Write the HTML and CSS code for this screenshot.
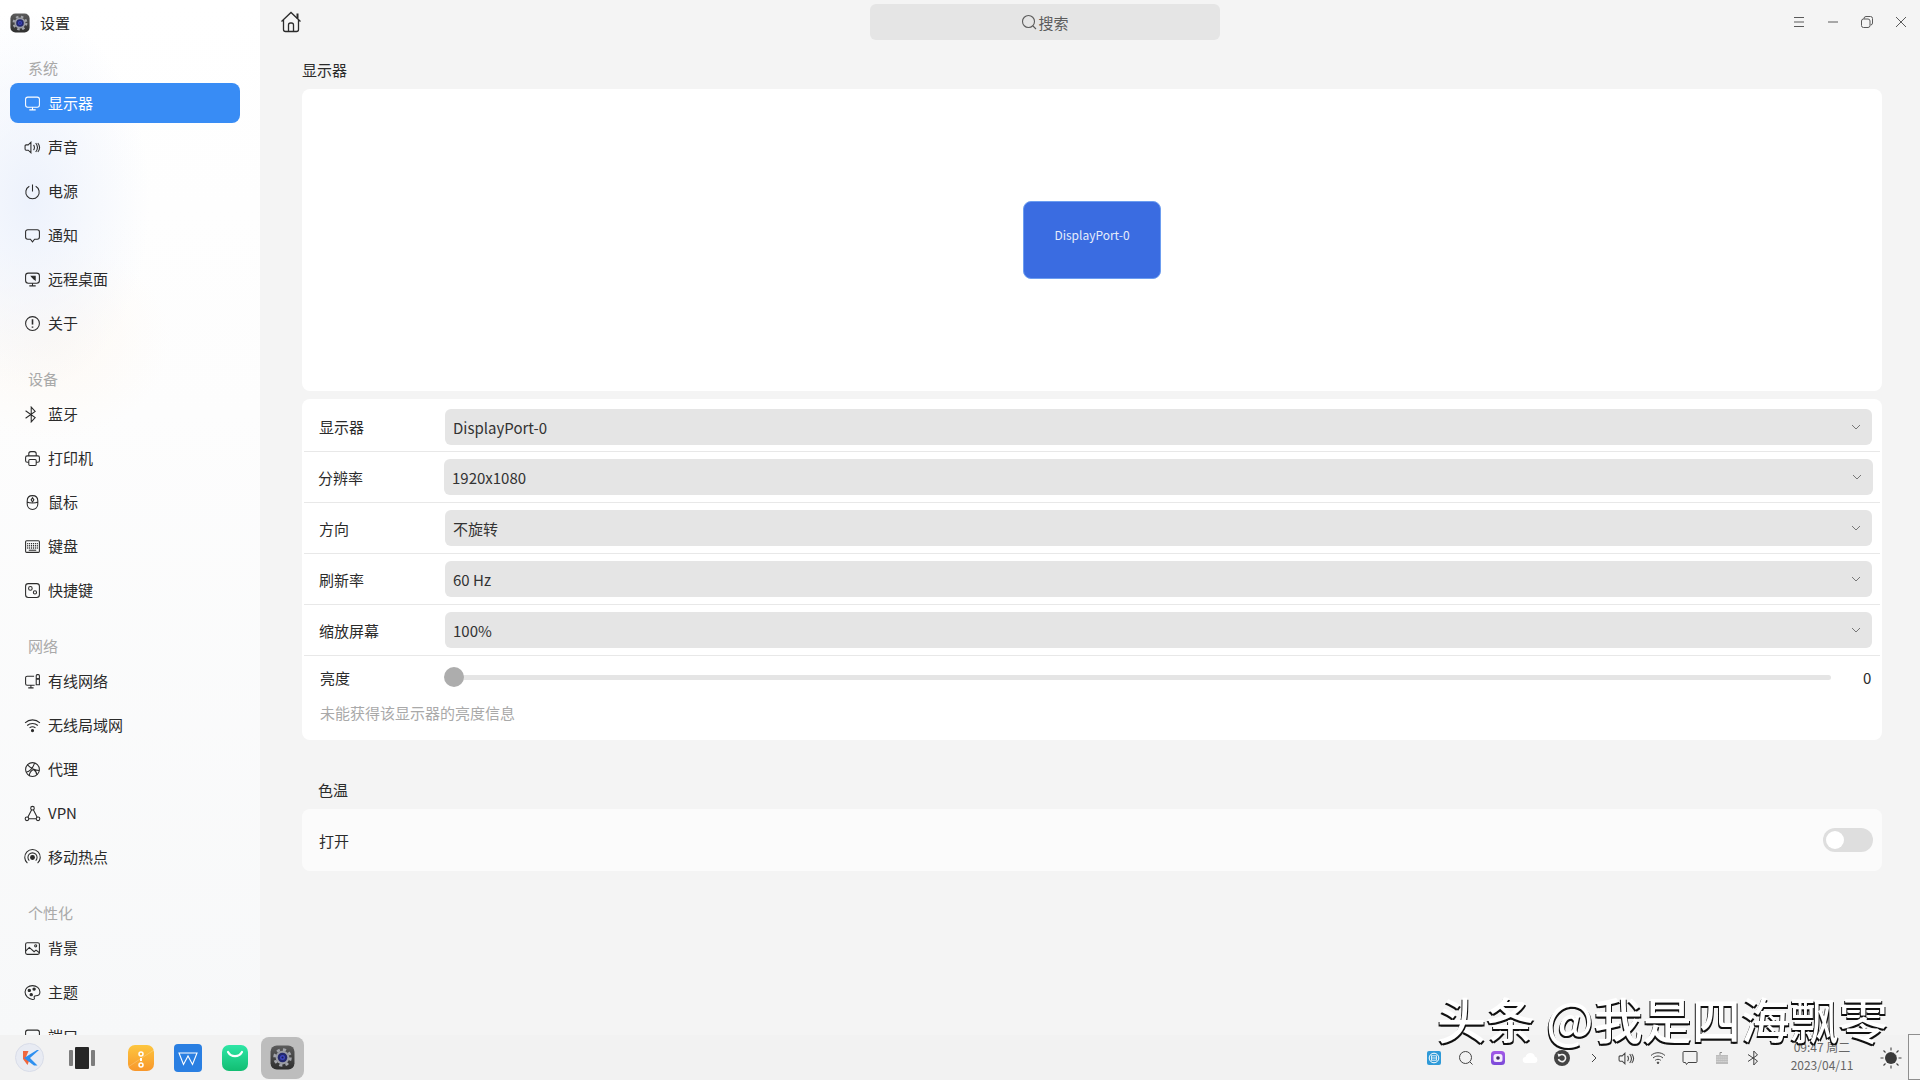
FILE: index.html
```html
<!DOCTYPE html>
<html lang="zh-CN">
<head>
<meta charset="utf-8">
<title>设置</title>
<link rel="stylesheet" href="styles.css">
</head>
<body>
<svg class="defs" width="0" height="0" aria-hidden="true">
  <defs>
    <linearGradient id="gYellow" x1="0" y1="0" x2="0" y2="1"><stop offset="0" stop-color="#fdc63f"/><stop offset="1" stop-color="#f8972b"/></linearGradient>
    <linearGradient id="gGreen" x1="0" y1="0" x2="0" y2="1"><stop offset="0" stop-color="#2fe6a6"/><stop offset="1" stop-color="#12bd72"/></linearGradient>
    <linearGradient id="gPurple" x1="0" y1="0" x2="0" y2="1"><stop offset="0" stop-color="#a45ae8"/><stop offset="1" stop-color="#7a49d8"/></linearGradient>
    <linearGradient id="gDark" x1="0" y1="0" x2="0" y2="1"><stop offset="0" stop-color="#5c5c5c"/><stop offset="1" stop-color="#2e2e2e"/></linearGradient>
    <symbol id="gear" viewBox="0 0 24 24">
      <rect x="0.5" y="0.5" width="23" height="23" rx="6" fill="url(#gDark)"/>
      <circle cx="12" cy="12" r="7.6" fill="none" stroke="#a2a4aa" stroke-width="2.6" stroke-dasharray="3 3"/>
      <circle cx="12" cy="12" r="6.6" fill="#9a9ca4"/>
      <circle cx="12" cy="12" r="4.6" fill="#23286f"/>
      <circle cx="12" cy="12" r="2.4" fill="#3d46c0"/>
      <circle cx="12" cy="12" r="1" fill="#1b1d55"/>
    </symbol>
  </defs>
</svg>

<div class="app">
  <aside class="sidebar">
    <div class="app-title">
      <svg class="app-logo" width="20" height="20"><use href="#gear"/></svg>
      <span>设置</span>
    </div>

    <div class="nav-group">
      <div class="nav-label">系统</div>
      <div class="nav-item active">
        <svg class="ico" viewBox="0 0 16 16"><rect x="1.5" y="2" width="13" height="9.5" rx="2"/><path d="M8 11.5V14M5 14h6"/></svg><span>显示器</span>
      </div>
      <div class="nav-item">
        <svg class="ico" viewBox="0 0 16 16"><path d="M4 5.500 6.500 3v10L4 10.500H2a1 1 0 0 1-1-1v-3a1 1 0 0 1 1-1z"/><path d="M9 5.500c1 1.500 1 3.500 0 5M11 3.800c2 2.500 2 5.900 0 8.400M13 3.800c2 2.500 2 5.900 0 8.400"/></svg><span>声音</span>
      </div>
      <div class="nav-item">
        <svg class="ico" viewBox="0 0 16 16"><path d="M8 1.500v6.500M5 3a6.300 6.300 0 1 0 6 0"/></svg><span>电源</span>
      </div>
      <div class="nav-item">
        <svg class="ico" viewBox="0 0 16 16"><path d="M3.500 2.500h9a2 2 0 0 1 2 2v5a2 2 0 0 1-2 2H10l-2 2.500-2-2.500H3.500a2 2 0 0 1-2-2v-5a2 2 0 0 1 2-2z"/></svg><span>通知</span>
      </div>
      <div class="nav-item">
        <svg class="ico" viewBox="0 0 16 16"><rect x="1.500" y="2" width="13" height="9.500" rx="2.500"/><path d="M8 11.500V14M5 14h6"/><path class="solid" d="M7 5h3.500v3.500z"/><path d="M10 8 7 5"/></svg><span>远程桌面</span>
      </div>
      <div class="nav-item">
        <svg class="ico" viewBox="0 0 16 16"><circle cx="8" cy="8" r="6.500"/><path class="thick" d="M8 4v5"/><path class="thick" d="M8 10.800v1.200"/></svg><span>关于</span>
      </div>
    </div>

    <div class="nav-group">
      <div class="nav-label">设备</div>
      <div class="nav-item">
        <svg class="ico" viewBox="0 0 16 16"><path d="M1.500 4.500 10.500 11 6.800 15V1l3.700 4-9 6.500"/></svg><span>蓝牙</span>
      </div>
      <div class="nav-item">
        <svg class="ico" viewBox="0 0 16 16"><path d="M4.500 5.500V3.500a2 2 0 0 1 2-2h3a2 2 0 0 1 2 2v2M4.500 11.500H3a1.500 1.500 0 0 1-1.500-1.500V7A1.500 1.500 0 0 1 3 5.500h10A1.500 1.500 0 0 1 14.500 7v3a1.500 1.500 0 0 1-1.500 1.500h-1.500"/><rect x="4.500" y="9" width="7" height="5.500" rx="1"/></svg><span>打印机</span>
      </div>
      <div class="nav-item">
        <svg class="ico" viewBox="0 0 16 16"><path d="M8 1.500c3 0 5 2 5 5v3c0 3-2.200 5-5 5s-5-2-5-5v-3c0-3 2-5 5-5zM3 7.500c2 1.300 8 1.300 10 0"/><path d="M8 3.500 6.700 5.500 8 7.500l1.300-2z"/></svg><span>鼠标</span>
      </div>
      <div class="nav-item">
        <svg class="ico" viewBox="0 0 16 16"><rect x="1.500" y="2.500" width="13" height="11" rx="1"/><path class="dots" d="M3 5.200h10M3 7.300h10M3 9.400h10"/><path d="M4.500 11.500h7"/></svg><span>键盘</span>
      </div>
      <div class="nav-item">
        <svg class="ico" viewBox="0 0 16 16"><rect x="1.500" y="1.500" width="13" height="13" rx="2.500"/><circle cx="6" cy="6" r="1.700"/><circle cx="10.300" cy="9.800" r="1.500"/></svg><span>快捷键</span>
      </div>
    </div>

    <div class="nav-group">
      <div class="nav-label">网络</div>
      <div class="nav-item">
        <svg class="ico" viewBox="0 0 16 16"><path d="M9.500 3H3a1.500 1.500 0 0 0-1.500 1.500V10A1.500 1.500 0 0 0 3 11.500h7M6.500 11.500V14M4 14h5"/><rect x="11.500" y="1.500" width="3" height="4" rx="1"/><path d="M11.500 5.500h3V11h-3z"/></svg><span>有线网络</span>
      </div>
      <div class="nav-item">
        <svg class="ico" viewBox="0 0 16 16"><path d="M1 5.500c4-3.700 10-3.700 14 0M3 8c2.900-2.600 7.100-2.600 10 0M5.200 10.300c1.600-1.300 4-1.300 5.600 0"/><circle class="solid" cx="8" cy="12.800" r="1"/></svg><span>无线局域网</span>
      </div>
      <div class="nav-item">
        <svg class="ico" viewBox="0 0 16 16"><circle cx="8" cy="8" r="6.500"/><path d="M3 3.500c3 3 6.500 5.500 11.500 5.500M2 10.500c3-.5 6-3 8-8.500M5 14c0-3 2-5 4-6 1.500 1 3 3 3 5"/></svg><span>代理</span>
      </div>
      <div class="nav-item">
        <svg class="ico" viewBox="0 0 16 16"><circle cx="8" cy="3" r="1.700"/><circle cx="2.800" cy="13" r="1.700"/><circle cx="13.200" cy="13" r="1.700"/><path d="M7.200 4.500 3.600 11.500M8.800 4.500l3.600 7M4.500 13h7"/></svg><span>VPN</span>
      </div>
      <div class="nav-item">
        <svg class="ico" viewBox="0 0 16 16"><circle class="solid" cx="8" cy="8" r="1.800"/><path d="M5 11a4.300 4.300 0 1 1 6 0M3.200 13.300a7.300 7.300 0 1 1 9.600 0"/></svg><span>移动热点</span>
      </div>
    </div>

    <div class="nav-group">
      <div class="nav-label">个性化</div>
      <div class="nav-item">
        <svg class="ico" viewBox="0 0 16 16"><rect x="1.500" y="2.500" width="13" height="11" rx="1.500"/><path d="M1.500 10.500 5 7l4.500 4 1.800-1.500 3.200 2.500"/><circle cx="11" cy="5.500" r="1"/></svg><span>背景</span>
      </div>
      <div class="nav-item">
        <svg class="ico" viewBox="0 0 16 16"><path d="M8 1.500c3.800 0 7 2.700 7 6 0 2.500-2 3.500-3.800 3.500-1.500 0-2 1-1.500 2 .5 1.200-.2 1.700-1.700 1.500C4 14 1 11 1 7.500 1 4.200 4.200 1.500 8 1.500z"/><circle class="solid" cx="5" cy="6" r="1.100"/><circle class="solid" cx="9.500" cy="4.800" r="1.100"/><circle class="solid" cx="6.800" cy="10" r="1.100"/></svg><span>主题</span>
      </div>
      <div class="nav-item">
        <svg class="ico" viewBox="0 0 16 16"><rect x="1.500" y="2" width="13" height="12" rx="2"/></svg><span>端口</span>
      </div>
    </div>
  </aside>

  <main class="main">
    <header class="topbar">
      <svg class="home" viewBox="0 0 22 22"><path d="M1.500 10.500 11 1.500l9.500 9M3.500 9v9.500a2 2 0 0 0 2 2h11a2 2 0 0 0 2-2V9"/><path class="heavy" d="M17.500 2.500v5"/><path d="M8.500 20.500V14a2 2 0 0 1 2-2h1a2 2 0 0 1 2 2v6.500"/></svg>
      <div class="search">
        <svg class="search-ico" viewBox="0 0 16 16"><circle cx="7.500" cy="7.500" r="6"/><path d="m12 12 3 3"/></svg>
        <span>搜索</span>
      </div>
      <div class="win-controls">
        <button class="win-btn"><svg class="win-ico" viewBox="0 0 12 12"><path d="M1 1.500h10M1 6h10M1 10.500h10"/></svg></button>
        <button class="win-btn"><svg class="win-ico" viewBox="0 0 12 12"><path d="M1 6h10"/></svg></button>
        <button class="win-btn"><svg class="win-ico" viewBox="0 0 12 12"><rect x="0.500" y="3" width="8.500" height="8.500" rx="2"/><path d="M3 3V2.500a2 2 0 0 1 2-2h4.500a2 2 0 0 1 2 2V7a2 2 0 0 1-2 2"/></svg></button>
        <button class="win-btn"><svg class="win-ico" viewBox="0 0 12 12"><path d="m1 1 10 10M11 1 1 11"/></svg></button>
      </div>
    </header>

    <div class="content">
      <h2 class="sec-title">显示器</h2>
      <section class="card preview">
        <div class="monitor"><span>DisplayPort-0</span></div>
      </section>

      <section class="card options">
        <div class="row first">
          <span class="row-label">显示器</span>
          <div class="select"><span>DisplayPort-0</span><svg class="chev" viewBox="0 0 10 6"><path d="m1 1 4 4 4-4"/></svg></div>
        </div>
        <div class="row shifted">
          <span class="row-label">分辨率</span>
          <div class="select"><span>1920x1080</span><svg class="chev" viewBox="0 0 10 6"><path d="m1 1 4 4 4-4"/></svg></div>
        </div>
        <div class="row">
          <span class="row-label">方向</span>
          <div class="select"><span>不旋转</span><svg class="chev" viewBox="0 0 10 6"><path d="m1 1 4 4 4-4"/></svg></div>
        </div>
        <div class="row">
          <span class="row-label">刷新率</span>
          <div class="select"><span>60 Hz</span><svg class="chev" viewBox="0 0 10 6"><path d="m1 1 4 4 4-4"/></svg></div>
        </div>
        <div class="row">
          <span class="row-label">缩放屏幕</span>
          <div class="select"><span>100%</span><svg class="chev" viewBox="0 0 10 6"><path d="m1 1 4 4 4-4"/></svg></div>
        </div>
        <div class="slider-row">
          <span class="row-label">亮度</span>
          <div class="track"><div class="thumb"></div></div>
          <span class="slider-val">0</span>
        </div>
        <div class="hint">未能获得该显示器的亮度信息</div>
      </section>

      <h2 class="sec-title second">色温</h2>
      <section class="card toggle-card">
        <span>打开</span>
        <div class="toggle"><div class="knob"></div></div>
      </section>
    </div>
  </main>
</div>

<footer class="taskbar">
  <div class="dock">
    <div class="dock-cell start">
      <svg width="29" height="29" viewBox="0 0 29 29"><circle cx="14.500" cy="14.500" r="14" fill="#e8ebf3" stroke="#d8dce8"/><path d="M8 8h5.500l-2.500 6 3 4-1.500 4L8 16z" fill="#f0673e"/><path d="M22 7 9 15l10 7.500h3.500L15 15l9-8z" fill="#2d8ff0"/></svg>
    </div>
    <div class="dock-cell view">
      <div class="side-bar"></div><div class="main-bar"></div><div class="side-bar"></div>
    </div>
    <div class="dock-cell">
      <svg width="26" height="26" viewBox="0 0 26 26"><rect width="26" height="26" rx="7" fill="url(#gYellow)"/><path d="M26 5 0 22" stroke="#fff" stroke-width="0.800" opacity=".25"/><circle cx="13" cy="9" r="2" fill="none" stroke="#fff" stroke-width="1.500"/><circle cx="13" cy="20" r="2" fill="none" stroke="#fff" stroke-width="1.500"/><path d="M13 13v3" stroke="#fff" stroke-width="2"/></svg>
    </div>
    <div class="dock-cell">
      <svg width="28" height="28" viewBox="0 0 28 28"><rect width="28" height="28" rx="4" fill="#2a7fe2"/><path d="M5 9h18l-4.500 11.500L14 12l-4.500 8.500z" fill="none" stroke="#fff" stroke-width="1.100"/></svg>
    </div>
    <div class="dock-cell">
      <svg width="26" height="26" viewBox="0 0 26 26"><rect width="26" height="26" rx="7" fill="url(#gGreen)"/><path d="M6 7c3 5.500 11 5.500 14 0" fill="none" stroke="#fff" stroke-width="2.200" stroke-linecap="round"/></svg>
    </div>
    <div class="dock-cell">
      <div class="dock-active"><svg width="25" height="25"><use href="#gear"/></svg></div>
    </div>
  </div>

  <div class="tray">
    <div class="tray-cell"><svg width="14" height="14" viewBox="0 0 14 14"><rect width="14" height="14" rx="2" fill="#2f9ad8"/><circle cx="7" cy="7" r="4.800" fill="none" stroke="#fff" stroke-width="1"/><rect x="4.500" y="4.800" width="5" height="4.400" fill="none" stroke="#fff" stroke-width=".8"/><path d="M4.500 7h5" stroke="#fff" stroke-width=".8"/></svg></div>
    <div class="tray-cell"><svg class="tray-line" width="16" height="16" viewBox="0 0 16 16"><circle cx="7.500" cy="7.500" r="6"/><path d="m12 12 2.500 2.500"/></svg></div>
    <div class="tray-cell"><svg width="14" height="14" viewBox="0 0 14 14"><rect width="14" height="14" rx="3.500" fill="url(#gPurple)"/><rect x="2.500" y="3" width="9" height="8" rx="2.500" fill="#f4eefb"/><circle cx="7" cy="7" r="1.800" fill="#3a2a5c"/></svg></div>
    <div class="tray-cell"><svg width="16" height="12" viewBox="0 0 16 12"><path d="M4 11a3 3 0 0 1-.5-6C4 2.500 6 1 8.500 1c2.300 0 4 1.500 4.300 3.500A3.300 3.300 0 0 1 12.500 11z" fill="#fff"/></svg></div>
    <div class="tray-cell"><svg width="16" height="16" viewBox="0 0 16 16"><circle cx="8" cy="8" r="8" fill="#444"/><path d="M5 6a3.600 3.600 0 1 1-.5 3" fill="none" stroke="#f2f2f2" stroke-width="1.600"/><path d="M3.500 3.500 7 4.500 4.500 7z" fill="#f2f2f2"/></svg></div>
    <div class="tray-cell"><svg class="tray-line" width="6" height="10" viewBox="0 0 6 10"><path d="m1 1 4 4-4 4"/></svg></div>
    <div class="tray-cell"><svg class="tray-line" width="17" height="17" viewBox="0 0 16 16"><path d="M4 5.500 6.500 3v10L4 10.500H2a1 1 0 0 1-1-1v-3a1 1 0 0 1 1-1z"/><path d="M9 5.500c1 1.500 1 3.500 0 5M11 3.800c2 2.500 2 5.900 0 8.400M13 3.800c2 2.500 2 5.900 0 8.400"/></svg></div>
    <div class="tray-cell"><svg class="tray-line" width="16" height="16" viewBox="0 0 16 16"><path d="M1 5.500c4-3.700 10-3.700 14 0M3 8c2.900-2.600 7.100-2.600 10 0M5.200 10.300c1.600-1.300 4-1.300 5.600 0"/><circle cx="8" cy="12.800" r=".8" fill="#444"/></svg></div>
    <div class="tray-cell"><svg class="tray-line" width="16" height="16" viewBox="0 0 16 16"><path d="M2 1.500h12a1 1 0 0 1 1 1v9a1 1 0 0 1-1 1H6l-1.500 2-1-2H2a1 1 0 0 1-1-1v-9a1 1 0 0 1 1-1z"/></svg></div>
    <div class="tray-cell"><svg width="14" height="14" viewBox="0 0 14 14"><rect x="1" y="4" width="12" height="9" fill="#bcbcbc"/><path d="M1.500 6h11M1.500 8.200h11M1.500 10.400h11" stroke="#e8e8e8" stroke-width=".8" stroke-dasharray="1.200 .8"/><path d="M5 4V1.500h2" fill="none" stroke="#888" stroke-width=".9"/></svg></div>
    <div class="tray-cell"><svg class="tray-line" width="14" height="16" viewBox="0 0 14 16"><path d="M1 4.500 10.500 11 6.800 15V1l3.700 4L1 11.500"/></svg></div>
    <div class="clock"><span>09:47 周二</span><span>2023/04/11</span></div>
    <div class="theme-cell"><svg width="24" height="24" viewBox="0 0 24 24"><circle cx="12" cy="12" r="6" fill="#3a3a3a"/><path d="M12 6a6 6 0 0 1 5.500 8.400A6.500 6.500 0 0 0 12 6z" fill="#ddd"/><path d="M12 1.500v3M12 19.500v3M1.500 12h3M19.500 12h3M4.500 4.500l2 2M17.500 17.500l2 2M4.500 19.500l2-2M17.500 6.500l2-2" stroke="#444" stroke-width="1.100"/></svg></div>
    <div class="show-desktop"></div>
  </div>
</footer>

<div class="watermark">头条 @我是四海飘零</div>
</body>
</html>
```
FILE: styles.css
```css
* { box-sizing: border-box; }
html, body { margin: 0; height: 1080px; overflow: hidden; }
body {
  position: relative;
  display: flex;
  flex-direction: column;
  width: 1920px;
  font-family: "Noto Sans CJK SC", "Noto Sans", sans-serif;
  font-size: 15px;
  color: #2b2b2b;
  background: #f4f4f4;
}
.defs { position: absolute; }
.app { display: flex; height: 1035px; overflow: hidden; flex: none; }

/* Sidebar */
.sidebar {
  width: 260px;
  flex: none;
  overflow: hidden;
  padding: 0 20px 0 10px;
  background:
    radial-gradient(ellipse 120px 190px at 30px 200px, #edf2fc 0%, rgba(237,242,252,0) 100%),
    radial-gradient(ellipse 120px 100px at 50px 340px, #fdf9f4 0%, rgba(253,249,244,0) 100%),
    linear-gradient(#ffffff, #fdfdfd 40%, #f7f8f9);
}
.app-title {
  display: flex;
  align-items: center;
  gap: 10px;
  height: 46px;
  margin-bottom: 10px;
}
.app-title span { margin-bottom: 2px; }
.app-logo { flex: none; }
.nav-group { display: flex; flex-direction: column; gap: 4px; margin-bottom: 24px; }
.nav-label {
  height: 24px;
  line-height: 24px;
  padding-left: 18px;
  margin-bottom: -1px;
  color: #a9a9a9;
}
.nav-item {
  display: flex;
  align-items: center;
  gap: 7px;
  height: 40px;
  flex: none;
  padding-left: 14px;
  border-radius: 8px;
  color: #2b2b2b;
}
.nav-item span { margin-bottom: 2px; }
.nav-item.active { background: #388cf5; color: #fff; }
.ico {
  width: 17px;
  height: 17px;
  flex: none;
  fill: none;
  stroke: currentColor;
  stroke-width: 1;
}
.ico .solid { fill: currentColor; }
.ico .thick { stroke-width: 1.500; }
.ico .dots { stroke-dasharray: 1 .8; stroke-width: 1.200; }

/* Main */
.main { flex: 1; display: flex; flex-direction: column; min-width: 0; }
.topbar { display: flex; align-items: center; height: 44px; padding: 0 2px 0 20px; }
.home { width: 22px; height: 22px; fill: none; stroke: #2b2b2b; stroke-width: 1.300; flex: none; }
.home .heavy { stroke-width: 2; }
.search {
  display: flex;
  align-items: center;
  justify-content: center;
  gap: 1px;
  width: 350px;
  height: 36px;
  margin-left: 568px;
  border-radius: 6px;
  background: #e5e5e5;
  color: #5c5c5c;
}
.search-ico { width: 16px; height: 16px; fill: none; stroke: #5c5c5c; stroke-width: 1.100; }
.win-controls { display: flex; margin-left: auto; }
.win-btn {
  display: flex;
  align-items: center;
  justify-content: center;
  width: 34px;
  height: 34px;
  padding: 0;
  border: 0;
  background: none;
}
.win-ico { width: 12px; height: 12px; fill: none; stroke: #5a5a5a; stroke-width: 1; }

.content { padding: 14px 38px 0 42px; }
.sec-title {
  margin: 0 0 7px;
  height: 24px;
  line-height: 24px;
  font-size: 15px;
  font-weight: 400;
}
.sec-title.second { margin: 38px 0 7px 16px; }
.card { border-radius: 8px; background: #fff; }
.preview {
  display: flex;
  align-items: center;
  justify-content: center;
  height: 302px;
  margin-bottom: 8px;
}
.monitor {
  display: flex;
  justify-content: center;
  width: 138px;
  height: 78px;
  padding-top: 23px;
  line-height: 20px;
  font-size: 12px;
  color: #e6edfb;
  border: 1px solid #6c9df0;
  border-radius: 8px;
  background: #3a6ce1;
}
.options { height: 341px; padding: 3px 2px 0; }
.row {
  display: flex;
  align-items: center;
  padding: 7px 0;
  border-bottom: 1px solid #e8e8e8;
}
.row.first { padding-bottom: 6px; }
.row.first .row-label { margin-bottom: 2px; }
.row-label { width: 141px; padding-left: 15px; flex: none; }
.select {
  flex: 1;
  display: flex;
  align-items: center;
  justify-content: space-between;
  height: 36px;
  margin-right: 8px;
  padding: 0 11px 0 8px;
  border-radius: 6px;
  background: #e5e5e5;
  color: #333;
}
.row.shifted .select { margin-left: -1px; margin-right: 7px; }
.row.shifted .row-label { padding-left: 14px; }
.chev { width: 10px; height: 6px; fill: none; stroke: #777; stroke-width: 1; }
.slider-row { display: flex; align-items: center; height: 42px; }
.slider-row .row-label { padding-left: 16px; }
.track {
  position: relative;
  width: 1386px;
  height: 5px;
  border-radius: 3px;
  background: #e5e5e5;
}
.thumb {
  position: absolute;
  left: -1px;
  top: -8px;
  width: 20px;
  height: 20px;
  border-radius: 50%;
  background: #adadad;
}
.slider-val { margin-left: 32px; }
.hint { padding: 3px 0 0 16px; line-height: 24px; color: #a9a9a9; }
.toggle-card {
  display: flex;
  align-items: center;
  justify-content: space-between;
  height: 62px;
  padding: 0 9px 0 17px;
  background: #fbfbfb;
}
.toggle {
  display: flex;
  align-items: center;
  width: 50px;
  height: 24px;
  padding-left: 3px;
  border-radius: 12px;
  background: #dedede;
}
.knob { width: 18px; height: 18px; border-radius: 50%; background: #fff; }

/* Taskbar */
.taskbar {
  display: flex;
  justify-content: space-between;
  height: 45px;
  flex: none;
  background: #f2f2f2;
}
.dock { display: grid; grid-template-columns: 58px 59.500px repeat(4, 47px); }
.dock-cell { display: flex; align-items: center; justify-content: center; }
.dock-cell.view { gap: 2px; margin-right: 11.500px; }
.side-bar { width: 4px; height: 16px; background: #7d7d7d; border-radius: 1px; }
.main-bar { width: 14px; height: 22px; background: #262626; border-radius: 1px; }
.dock-active {
  display: flex;
  align-items: center;
  justify-content: center;
  width: 43px;
  height: 42px;
  border-radius: 8px;
  background: #bdbdbd;
}
.tray { display: flex; align-items: stretch; }
.tray-cell { display: flex; align-items: center; justify-content: center; width: 32px; margin-top: 1px; }
.tray-line { fill: none; stroke: #444; stroke-width: 1; }
.clock {
  display: flex;
  flex-direction: column;
  align-items: center;
  justify-content: center;
  width: 104px;
  padding-bottom: 4px;
  font-size: 12px;
  line-height: 18px;
  color: #666;
}
.theme-cell { display: flex; align-items: center; justify-content: center; width: 34px; margin-top: 1px; }
.show-desktop {
  width: 12px;
  margin-top: -1px;
  border: 1px solid #8f8f8f;
  border-right: 0;
  background: #f6f6f6;
}

/* Watermark over the window */
.watermark {
  position: absolute;
  left: 1437px;
  top: 983px;
  font-size: 49px;
  font-weight: 500;
  line-height: 70px;
  white-space: nowrap;
  color: #fff;
  text-shadow: -1px 2px 0 #111, 1px 2px 0 #111;
}
```
